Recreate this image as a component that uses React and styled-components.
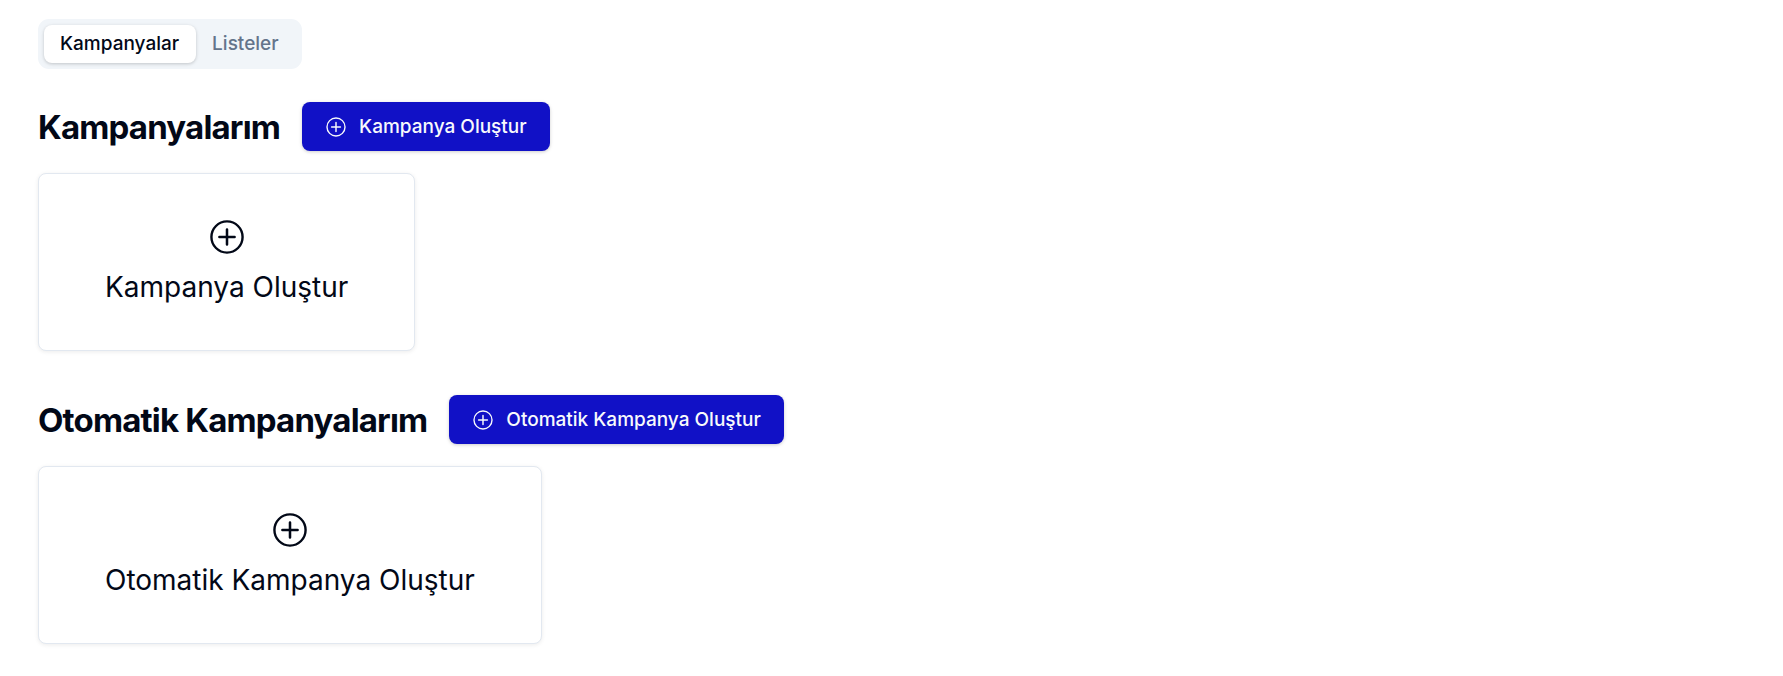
import React, { useState } from "react";
import styled, { createGlobalStyle } from "styled-components";

const GlobalStyle = createGlobalStyle`
  *, *::before, *::after { box-sizing: border-box; }
  body {
    margin: 0;
    background: #ffffff;
    color: #020817;
    font-family: Inter, "Liberation Sans", sans-serif;
  }
  button { font-family: inherit; cursor: pointer; }
`;

const Page = styled.main`
  display: flex;
  flex-direction: column;
  align-items: flex-start;
  padding: 19px 38px 31px;
`;

const TabList = styled.div`
  display: flex;
  padding: 6px;
  border-radius: 11px;
  background: #f1f5f9;
`;

const Tab = styled.button`
  height: 38px;
  padding: 0 17px 0 16px;
  border: 0;
  border-radius: 8px;
  font-size: 19px;
  line-height: 28px;
  font-weight: 500;
  color: ${({ $active }) => ($active ? "#020817" : "#64748b")};
  background: ${({ $active }) => ($active ? "#ffffff" : "transparent")};
  box-shadow: ${({ $active }) =>
    $active ? "0 1px 4px rgba(0, 0, 0, 0.1), 0 1px 3px rgba(0, 0, 0, 0.1)" : "none"};
`;

const Sections = styled.div`
  display: flex;
  flex-direction: column;
  gap: 44px;
  margin-top: 33px;
`;

const Section = styled.section`
  display: flex;
  flex-direction: column;
  align-items: flex-start;
  gap: 22px;
`;

const SectionHeader = styled.div`
  display: flex;
  align-items: center;
  gap: 22px;
`;

const SectionTitle = styled.h2`
  margin: 0;
  font-size: 33px;
  line-height: 44px;
  font-weight: 700;
  letter-spacing: -0.025em;
`;

const PrimaryButton = styled.button`
  display: flex;
  align-items: center;
  gap: 12px;
  height: 49px;
  padding: 0 23px;
  border: 0;
  border-radius: 8px;
  background: #1111c6;
  color: #f8fafc;
  font-size: 19px;
  line-height: 28px;
  font-weight: 500;
  box-shadow: 0 1px 4px rgba(0, 0, 0, 0.1), 0 1px 3px rgba(0, 0, 0, 0.1);
`;

const CreateCard = styled.button`
  display: flex;
  flex-direction: column;
  align-items: center;
  gap: 12px;
  padding: 44px 66px;
  border: 1px solid #e2e8f0;
  border-radius: 8px;
  background: #ffffff;
  color: #020817;
  font-size: 28px;
  line-height: 38px;
  font-weight: 400;
  box-shadow: 0 1px 4px rgba(0, 0, 0, 0.08);
`;

const Icon = styled.svg`
  display: block;
  flex: none;
  width: ${({ $size }) => $size}px;
  height: ${({ $size }) => $size}px;
`;

function PlusCircled({ size }) {
  return (
    <Icon $size={size} viewBox="0 0 15 15" fill="none" stroke="currentColor" aria-hidden="true">
      <circle cx="7.5" cy="7.5" r="6.15" strokeWidth="0.95" />
      <path d="M7.5 4.5v6M4.5 7.5h6" strokeLinecap="round" strokeWidth="1" />
    </Icon>
  );
}

function CampaignSection({ title, action }) {
  return (
    <Section>
      <SectionHeader>
        <SectionTitle>{title}</SectionTitle>
        <PrimaryButton type="button">
          <PlusCircled size={22} />
          {action}
        </PrimaryButton>
      </SectionHeader>
      <CreateCard type="button">
        <PlusCircled size={38} />
        {action}
      </CreateCard>
    </Section>
  );
}

const tabs = ["Kampanyalar", "Listeler"];

export default function App() {
  const [active, setActive] = useState(tabs[0]);
  return (
    <>
      <GlobalStyle />
      <Page>
        <TabList role="tablist">
          {tabs.map((tab) => (
            <Tab
              key={tab}
              type="button"
              role="tab"
              aria-selected={tab === active}
              $active={tab === active}
              onClick={() => setActive(tab)}
            >
              {tab}
            </Tab>
          ))}
        </TabList>
        <Sections>
          <CampaignSection title="Kampanyalarım" action="Kampanya Oluştur" />
          <CampaignSection title="Otomatik Kampanyalarım" action="Otomatik Kampanya Oluştur" />
        </Sections>
      </Page>
    </>
  );
}
